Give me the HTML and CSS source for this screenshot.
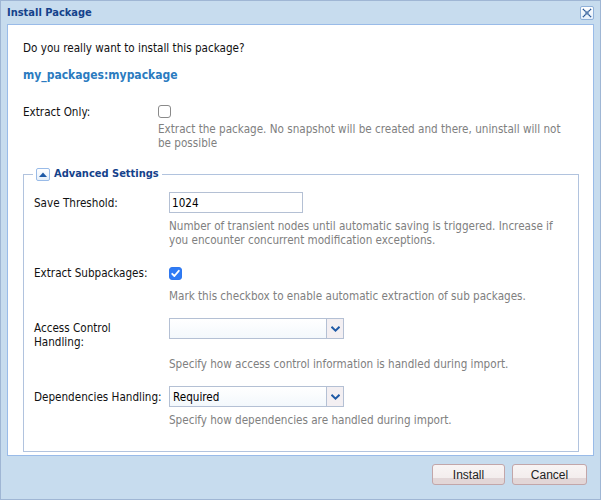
FILE: index.html
```html
<!DOCTYPE html>
<html>
<head>
<meta charset="utf-8">
<link rel="stylesheet" href="styles.css">
</head>
<body>
<div class="window">
  <div class="header">
    <span class="title">Install Package</span>
    <span class="close"><svg width="12" height="12" viewBox="0 0 12 12"><path d="M2 2L10 10M10 2L2 10" stroke="#1f4f91" stroke-width="1.6" stroke-dasharray="1.2 0.5" fill="none"/></svg></span>
  </div>
  <div class="panel">
    <p class="question">Do you really want to install this package?</p>
    <p class="pkg">my_packages:mypackage</p>
    <div class="row row-extract">
      <div class="label">Extract Only:</div>
      <div class="field">
        <span class="cb"></span>
        <div class="desc desc-extract">Extract the package. No snapshot will be created and there, uninstall will not be possible</div>
      </div>
    </div>
    <fieldset class="adv">
      <legend><span class="toggle"><svg width="8" height="5" viewBox="0 0 8 5"><path d="M0 5L4 0.5L8 5Z" fill="#1f5aa6"/></svg></span>Advanced Settings</legend>
      <div class="row row-threshold">
        <div class="label lbl-input">Save Threshold:</div>
        <div class="field">
          <div class="text-input">1024</div>
          <div class="desc desc-input">Number of transient nodes until automatic saving is triggered. Increase if you encounter concurrent modification exceptions.</div>
        </div>
      </div>
      <div class="row row-sub">
        <div class="label">Extract Subpackages:</div>
        <div class="field">
          <span class="cb cb-checked"><svg width="11" height="11" viewBox="0 0 11 11"><path d="M2.2 5.8L4.4 8L8.8 2.8" stroke="#fff" stroke-width="1.8" fill="none" stroke-linecap="round" stroke-linejoin="round"/></svg></span>
          <div class="desc desc-sub">Mark this checkbox to enable automatic extraction of sub packages.</div>
        </div>
      </div>
      <div class="row row-acl">
        <div class="label lbl-acl">Access Control<br>Handling:</div>
        <div class="field">
          <div class="select"><span class="select-value"></span><span class="trigger"><svg width="9" height="6" viewBox="0 0 9 6"><path d="M0.5 0.8L4.5 4.6L8.5 0.8" stroke="#1f5aa6" stroke-width="2" fill="none"/></svg></span></div>
          <div class="desc desc-acl">Specify how access control information is handled during import.</div>
        </div>
      </div>
      <div class="row row-dep">
        <div class="label lbl-input">Dependencies Handling:</div>
        <div class="field">
          <div class="select"><span class="select-value">Required</span><span class="trigger"><svg width="9" height="6" viewBox="0 0 9 6"><path d="M0.5 0.8L4.5 4.6L8.5 0.8" stroke="#1f5aa6" stroke-width="2" fill="none"/></svg></span></div>
          <div class="desc desc-input">Specify how dependencies are handled during import.</div>
        </div>
      </div>
    </fieldset>
  </div>
  <div class="footer">
    <button class="btn btn-install">Install</button>
    <button class="btn btn-cancel">Cancel</button>
  </div>
</div>
</body>
</html>
```

FILE: styles.css
```css
* { box-sizing: border-box; }
html, body { margin: 0; padding: 0; }
body {
  width: 601px;
  height: 500px;
  font-family: "DejaVu Sans Condensed", "DejaVu Sans", sans-serif;
  font-stretch: condensed;
  font-size: 11.6px;
  line-height: 14px;
  color: #111;
  background: #fff;
}
.window {
  width: 601px;
  height: 500px;
  border: 1px solid #9fb6d4;
  background: #c7dcee;
  display: flex;
  flex-direction: column;
}
.header {
  height: 23px;
  flex: none;
  display: flex;
  align-items: center;
  justify-content: space-between;
  padding: 0 6px 0 6px;
}
.title {
  font-weight: bold;
  color: #15428b;
  font-size: 11px;
}
.close {
  width: 14px;
  height: 14px;
  border: 1px solid #8fb0d8;
  border-radius: 2px;
  background: linear-gradient(#ffffff, #e3eefa);
  display: flex;
  align-items: center;
  justify-content: center;
}
.close svg { display: block; }
.panel {
  flex: none;
  height: 432px;
  margin: 0 6px;
  background: #fff;
  border: 1px solid #99bbe8;
  padding: 16px 14px 0 15px;
}
p { margin: 0; }
.pkg {
  margin-top: 13px;
  font-weight: bold;
  color: #2b7bbf;
  font-size: 12px;
}
.row { display: flex; align-items: flex-start; }
.label { width: 135px; flex: none; }
.field { flex: 1; display: flex; flex-direction: column; align-items: flex-start; }
.desc { color: #808080; }
.row-extract { margin-top: 23px; }
.cb {
  width: 13px;
  height: 13px;
  border: 1px solid #8a8a8a;
  border-radius: 3px;
  background: #fff;
  display: flex;
  align-items: center;
  justify-content: center;
}
.cb-checked {
  border-color: #2f78ef;
  background: #2f7bf5;
  margin-top: 1px;
}
.cb svg { display: block; }
.desc-extract { margin-top: 4px; max-width: 410px; }
.adv {
  margin: 17px 0 0 0;
  border: 1px solid #b1c3de;
  padding: 11px 10px 24px 10px;
  min-width: 0;
}
.adv legend {
  margin-left: -1px;
  padding: 0 3px;
  display: flex;
  align-items: center;
  gap: 4px;
  font-weight: bold;
  color: #15428b;
  font-size: 11px;
  height: 14px;
}
.toggle {
  width: 14px;
  height: 13px;
  border: 1px solid #99bbe8;
  border-radius: 2px;
  background: linear-gradient(#ffffff, #e6eff9);
  display: flex;
  align-items: center;
  justify-content: center;
}
.toggle svg { display: block; }
.lbl-input { padding-top: 4px; }
.lbl-acl { padding-top: 3px; }
.text-input {
  width: 134px;
  height: 21px;
  border: 1px solid #b4c0d4;
  background: #fff;
  padding: 3px 2px 0 2px;
  color: #000;
  font-size: 11.6px;
}
.desc-input { margin-top: 6px; }
.row-sub { margin-top: 19px; }
.desc-sub { margin-top: 9px; }
.row-acl { margin-top: 15px; }
.select {
  width: 175px;
  height: 21px;
  border: 1px solid #b4c0d4;
  background: linear-gradient(#ffffff, #f3f8fc);
  display: flex;
}
.select-value {
  flex: 1;
  padding: 3px 3px 0 3px;
  color: #000;
  font-size: 11.6px;
}
.trigger {
  width: 17px;
  flex: none;
  border-left: 1px solid #b4c0d4;
  background: #f3eff2;
  display: flex;
  align-items: center;
  justify-content: center;
}
.trigger svg { display: block; }
.desc-acl { margin-top: 18px; }
.row-dep { margin-top: 15px; }
.footer {
  flex: 1;
  display: flex;
  justify-content: flex-end;
  align-items: flex-start;
  gap: 7px;
  padding: 8px 13px 0 0;
}
.btn {
  height: 21px;
  border: 1px solid #c2a6a9;
  border-radius: 3px;
  background: linear-gradient(#f8f4f4 0%, #f3eded 70%, #e2d6d7 71%, #e2d6d7 100%);
  font-family: "Liberation Sans", Arial, sans-serif;
  font-size: 12px;
  color: #222;
  padding: 0;
  margin: 0;
}
.btn-install { width: 73px; }
.btn-cancel { width: 75px; }
```
